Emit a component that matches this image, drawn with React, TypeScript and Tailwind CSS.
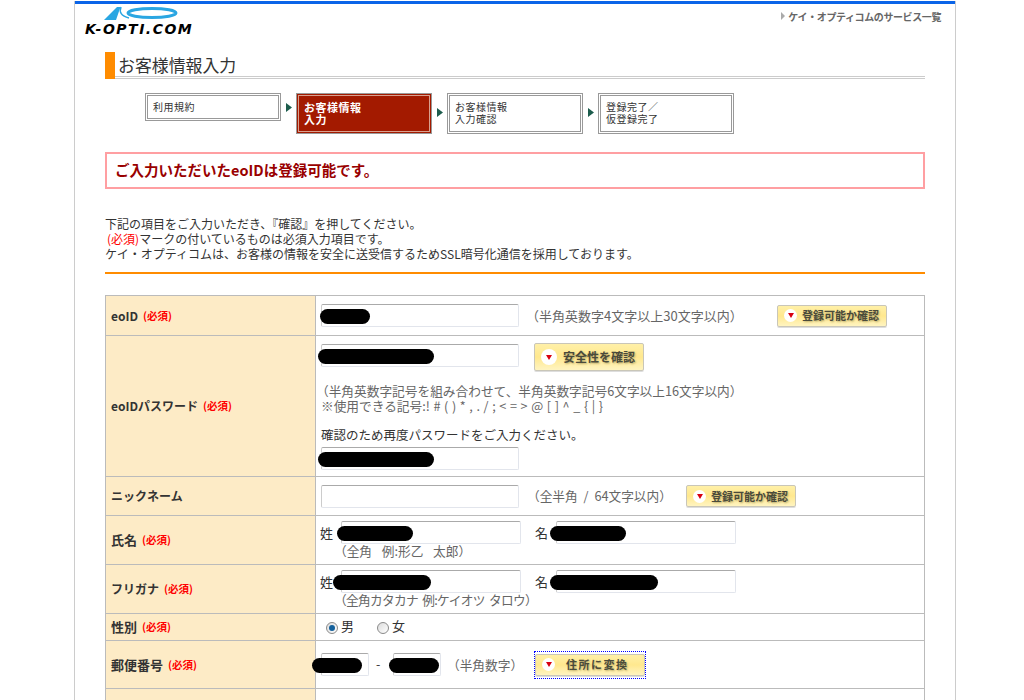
import React from "react";
import clsx from "clsx";

function Arrow({ className }: { className: string }) {
  return (
    <div className="w-[15px] shrink-0 flex justify-center">
      <svg width="6" height="9" viewBox="0 0 6 9" className={className}>
        <path d="M0 0 L6 4.5 L0 9 Z" fill="#1c5c4c" />
      </svg>
    </div>
  );
}

function Step({ lines, active, short }: { lines: string[]; active?: boolean; short?: boolean }) {
  return (
    <div
      className={clsx(
        "w-[136px] shrink-0 border border-[#999]",
        short ? "h-[28px]" : "h-[41px]",
        active ? "bg-[#a31a00] p-[1px]" : "bg-white p-[1px]"
      )}
    >
      <div
        className={clsx(
          "h-full border pl-[5px] pt-[5px] leading-[12px] tracking-[0.5px]",
          active ? "border-[#d9a08f] text-white font-bold text-[11px]" : "border-[#999] text-[#333] text-[10px]"
        )}
      >
        {lines.map((l) => (
          <div key={l}>{l}</div>
        ))}
      </div>
    </div>
  );
}

function Req() {
  return <span className="ml-[5px] text-[10.5px] font-bold text-[#f00]">(必須)</span>;
}

function Row({ label, req, big, h, children }: { label: string; req?: boolean; big?: boolean; h: string; children?: React.ReactNode }) {
  return (
    <div className={clsx("flex border-b border-[#bbb]", h)}>
      <div
        className={clsx(
          "w-[210px] shrink-0 bg-[#fdebc6] border-r border-[#bbb] pl-[5px] flex items-center font-bold text-[#333]",
          big ? "text-[13px]" : "text-[12px]"
        )}
      >
        {label}
        {req && <Req />}
      </div>
      <div className="flex-1 min-w-0">{children}</div>
    </div>
  );
}

// text box, blob = the blacked out part of the screenshot
function Field({ w, blobLeft, blobW }: { w: string; blobLeft?: string; blobW?: string }) {
  return (
    <div className={clsx("relative h-[23px] shrink-0 rounded-[2px] border border-[#e2e5ec] border-t-[#aaa] border-l-[#ccc] bg-white", w)}>
      {blobW && <div className={clsx("absolute top-[4px] h-[15px] rounded-full bg-black", blobLeft, blobW)} />}
    </div>
  );
}

function YellowButton({ label, tall, wide }: { label: string; tall?: boolean; wide?: boolean }) {
  return (
    <div
      className={clsx(
        "w-[110px] shrink-0 flex items-center rounded-[2px] border border-[#c9c6b8] bg-gradient-to-b from-[#fff0a8] via-[#ffe88e] to-[#fff4c0] pl-[6px] text-[#4a4a3a] font-bold shadow-[0_1px_0_#ddd]",
        tall ? "h-[28px] text-[12px] gap-[6px] pl-[5px]" : "h-[22px] text-[11px] gap-[5px]"
      )}
    >
      <div className={clsx("rounded-full bg-white flex items-center justify-center shrink-0", tall ? "w-[16px] h-[16px]" : "w-[13px] h-[13px]")}>
        <svg width="6" height="5" viewBox="0 0 6 5">
          <path d="M0 0 H6 L3 5 Z" fill="#d80010" />
        </svg>
      </div>
      <span className={clsx("whitespace-nowrap [text-shadow:1px_1px_2px_#b9a868]", wide && "ml-[6px] tracking-[1.5px]")}>{label}</span>
    </div>
  );
}

function Radio({ checked }: { checked?: boolean }) {
  return (
    <div className="mt-[1px] w-[12px] h-[12px] rounded-full border border-[#8a8a8a] bg-gradient-to-br from-[#dcdcdc] to-white flex items-center justify-center shrink-0">
      {checked && <div className="w-[6px] h-[6px] rounded-full bg-[#14609c]" />}
    </div>
  );
}

function NameRow({ label, note, noteClass, big, seiLeft, seiW, meiW }: { label: string; note: string; noteClass: string; big?: boolean; seiLeft: string; seiW: string; meiW: string }) {
  return (
    <Row label={label} req big={big} h="h-[49px]">
      <div className="pl-[4px] pt-[5px]">
        <div className="flex items-center text-[13px] text-[#333]">
          <span className="w-[21px]">姓</span>
          <Field w="w-[180px]" blobLeft={seiLeft} blobW={seiW} />
          <span className="ml-[14px] w-[21px]">名</span>
          <Field w="w-[180px]" blobLeft="left-[-7px]" blobW={meiW} />
        </div>
        <div className={clsx("pl-[14px] mt-[-1px] text-[12.7px] leading-[16px] text-[#666] whitespace-pre", noteClass)}>{note}</div>
      </div>
    </Row>
  );
}

export default function App() {
  return (
    <div className="h-[700px] overflow-hidden bg-white font-['Noto_Sans_CJK_JP','Liberation_Sans',sans-serif] text-[#333]">
      <div className="ml-[74px] w-[882px] h-full border-x border-[#ccc]">
        <div className="mt-[1px] h-[3px] bg-[#0a64e8]" />

        {/* header */}
        <div className="h-[31px] flex justify-between pl-[10px] pr-[14px]">
          <div className="relative w-[108px] h-[31px]">
            <svg width="108" height="20" viewBox="0 0 108 20" className="absolute left-0 top-[1px]">
              <path d="M19 15 L32 2 L35.5 2 L31 15 Z" fill="#2aa6e2" />
              <path d="M36 2 C34 7 36 11 44 13" fill="none" stroke="#2aa6e2" strokeWidth="1.5" />
              <ellipse cx="67" cy="8" rx="24" ry="4.5" fill="none" stroke="#2aa6e2" strokeWidth="3" />
            </svg>
            <div className="absolute left-0 top-[18px] font-['DejaVu_Sans',sans-serif] text-[14px] leading-[14px] font-bold italic tracking-[1.5px] text-black whitespace-nowrap">
              K-OPTI.COM
            </div>
          </div>
          <div className="flex items-center h-[14px] mt-[5px] gap-[3px] text-[10px] font-bold text-[#666] tracking-[-0.4px]">
            <svg width="4" height="8" viewBox="0 0 4 8">
              <path d="M0 0 L4 4 L0 8 Z" fill="#aaa" />
            </svg>
            ケイ・オプティコムのサービス一覧
          </div>
        </div>

        <div className="pl-[30px] pr-[30px]">
          {/* title */}
          <div className="mt-[17px] flex h-[27px]">
            <div className="w-[10px] bg-[#ff8c00]" />
            <div className="flex-1 border-b-[3px] border-double border-[#ccc] pl-[3px] text-[16.9px] leading-[26px] text-[#333]">
              お客様情報入力
            </div>
          </div>

          {/* steps */}
          <div className="mt-[14px] ml-[40px] flex items-start">
            <Step lines={["利用規約"]} short />
            <Arrow className="mt-[10px]" />
            <Step lines={["お客様情報", "入力"]} active />
            <Arrow className="mt-[15px]" />
            <Step lines={["お客様情報", "入力確認"]} />
            <Arrow className="mt-[15px]" />
            <Step lines={["登録完了／", "仮登録完了"]} />
          </div>

          {/* notice */}
          <div className="mt-[18px] h-[37px] border-2 border-[#ff9fa2] pl-[8px] pb-[2px] flex items-center text-[14.5px] font-bold text-[#990000]">
            ご入力いただいたeoIDは登録可能です。
          </div>

          <div className="mt-[27px] text-[12px] leading-[15px] text-[#333]">
            <div>下記の項目をご入力いただき、『確認』を押してください。</div>
            <div>
              <span className="text-[#f00] ml-[2px]">(必須)</span>マークの付いているものは必須入力項目です。
            </div>
            <div>ケイ・オプティコムは、お客様の情報を安全に送受信するためSSL暗号化通信を採用しております。</div>
          </div>

          <div className="mt-[11px] h-[2px] bg-[#ff8c00]" />

          {/* form table */}
          <div className="mt-[21px] border-x border-t border-[#bbb]">
            <Row label="eoID" req h="h-[40px]">
              <div className="h-full flex items-center pl-[5px]">
                <Field w="w-[198px]" blobLeft="left-[-2px]" blobW="w-[50px]" />
                <span className="ml-[7px] w-[251px] text-[13px] text-[#666] whitespace-nowrap">（半角英数字4文字以上30文字以内）</span>
                <YellowButton label="登録可能か確認" />
              </div>
            </Row>
            <Row label="eoIDパスワード" req h="h-[141px]">
              <div className="pl-[5px] pt-[7px]">
                <div className="flex items-start">
                  <div className="pt-[1px]">
                    <Field w="w-[198px]" blobLeft="left-[-4px]" blobW="w-[116px]" />
                  </div>
                  <div className="ml-[15px]">
                    <YellowButton label="安全性を確認" tall />
                  </div>
                </div>
                <div className="mt-[12px] ml-[-5px] text-[12.7px] leading-[15px] text-[#666] whitespace-nowrap">
                  <div>（半角英数字記号を組み合わせて、半角英数字記号6文字以上16文字以内）</div>
                  <div className="ml-[5px] [word-spacing:0.75px]">※使用できる記号:! # ( ) * , . / ; &lt; = &gt; @ [ ] ^ _ {"{"} | {"}"}</div>
                </div>
                <div className="mt-[14px] text-[12.5px] leading-[15px] text-[#333]">確認のため再度パスワードをご入力ください。</div>
                <div className="mt-[5px]">
                  <Field w="w-[198px]" blobLeft="left-[-4px]" blobW="w-[116px]" />
                </div>
              </div>
            </Row>
            <Row label="ニックネーム" h="h-[39px]">
              <div className="h-full flex items-center pl-[5px]">
                <Field w="w-[198px]" />
                <span className="ml-[8px] w-[159px] text-[12.7px] text-[#666] whitespace-nowrap [word-spacing:3px]">（全半角 / 64文字以内）</span>
                <YellowButton label="登録可能か確認" />
              </div>
            </Row>
            <NameRow label="氏名" big note="（全角  例:形乙  太郎）" noteClass="[word-spacing:2px]" seiLeft="left-[-5px]" seiW="w-[76px]" meiW="w-[76px]" />
            <NameRow label="フリガナ" note="（全角カタカナ  例:ケイオツ  タロウ）" noteClass="tracking-[-0.7px]" seiLeft="left-[-9px]" seiW="w-[98px]" meiW="w-[108px]" />
            <Row label="性別" req big h="h-[27px]">
              <div className="h-full flex items-center pl-[10px] text-[13px]">
                <Radio checked />
                <span className="ml-[3px] mt-[-3px]">男</span>
                <div className="ml-[23px]">
                  <Radio />
                </div>
                <span className="ml-[3px] mt-[-3px]">女</span>
              </div>
            </Row>
            <Row label="郵便番号" req big h="h-[48px]">
              <div className="h-full flex items-center pl-[5px]">
                <Field w="w-[48px]" blobLeft="left-[-10px]" blobW="w-[50px]" />
                <span className="w-[24px] pl-[7px] text-[12.5px]">-</span>
                <Field w="w-[48px]" blobLeft="left-[-5px]" blobW="w-[50px]" />
                <span className="ml-[6px] w-[87px] text-[12.7px] text-[#666] whitespace-nowrap">（半角数字）</span>
                <div className="border border-dotted border-[#00f] py-[2px]">
                  <YellowButton label="住所に変換" wide />
                </div>
              </div>
            </Row>
            <Row label="" h="h-[60px]" />
          </div>
        </div>
      </div>
    </div>
  );
}
